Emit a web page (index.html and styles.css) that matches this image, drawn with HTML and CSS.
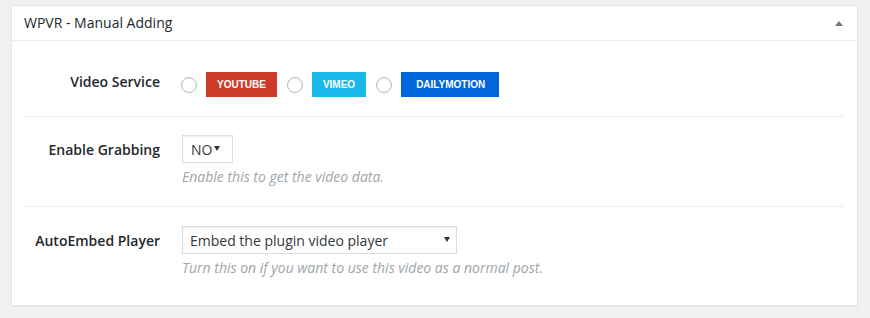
FILE: index.html
```html
<!DOCTYPE html>
<html>
<head>
    <title>WPVR - Manual Adding</title>
    <link rel="stylesheet" href="styles.css">
</head>
<body>
<!-- Metabox -->
<div class="postbox">
    <div class="postbox-header">
        <h2 class="postbox-title">WPVR - Manual Adding</h2>
        <span class="toggle-arrow"></span>
    </div>

    <div class="inside">
        <!-- Video service -->
        <div class="field-row">
            <div class="field-label field-label-radio">Video Service</div>
            <div class="field-control services">
                <label class="service">
                    <input type="radio" name="service" value="youtube">
                    <span class="badge badge-youtube">YOUTUBE</span>
                </label>
                <label class="service">
                    <input type="radio" name="service" value="vimeo">
                    <span class="badge badge-vimeo">VIMEO</span>
                </label>
                <label class="service">
                    <input type="radio" name="service" value="dailymotion">
                    <span class="badge badge-dailymotion">DAILYMOTION</span>
                </label>
            </div>
        </div>

        <!-- Grabbing -->
        <div class="field-row">
            <div class="field-label">Enable Grabbing</div>
            <div class="field-control">
                <div class="select-wrap select-small">
                    <select>
                        <option>NO</option>
                        <option>YES</option>
                    </select>
                </div>
                <p class="description">Enable this to get the video data.</p>
            </div>
        </div>

        <!-- AutoEmbed -->
        <div class="field-row">
            <div class="field-label">AutoEmbed Player</div>
            <div class="field-control">
                <div class="select-wrap select-wide">
                    <select>
                        <option>Embed the plugin video player</option>
                        <option>Use the default player</option>
                    </select>
                </div>
                <p class="description">Turn this on if you want to use this video as a normal post.</p>
            </div>
        </div>
    </div>
</div>
</body>
</html>
```

FILE: styles.css
```css
body {
    margin: 0;
    padding: 5px 12px 12px 11px;
    background: #f1f1f1;
    font-family: "Open Sans", "Liberation Sans", sans-serif;
    font-size: 14px;
    color: #23282d;
}

.postbox {
    background: #fff;
    border: 1px solid #e5e5e5;
    box-shadow: 0 1px 1px rgba(0, 0, 0, 0.04);
}

.postbox-header {
    display: flex;
    align-items: center;
    justify-content: space-between;
    height: 34px;
    padding: 0 14px 0 12px;
    border-bottom: 1px solid #eee;
}

.postbox-title {
    margin: 0;
    font-size: 14px;
    font-weight: 400;
    line-height: 1;
}

.toggle-arrow {
    width: 0;
    height: 0;
    border-left: 4px solid transparent;
    border-right: 4px solid transparent;
    border-bottom: 5px solid #72777c;
    margin-top: 1px;
}

.inside {
    padding: 11px 12px 8px;
}

.field-row {
    display: grid;
    grid-template-columns: 136px 1fr;
    column-gap: 22px;
    padding: 18px 0 19px;
    border-bottom: 1px solid #eee;
}

.field-row:first-child {
    padding-top: 20px;
}

.field-row:last-child {
    border-bottom: none;
    padding-top: 19px;
}

.field-label {
    text-align: right;
    font-weight: 600;
    line-height: 20px;
    padding-top: 5px;
}

.field-label-radio {
    padding-top: 0;
}

.field-control {
    min-width: 0;
}

/* radio + coloured badges */
.services {
    display: flex;
    align-items: center;
    gap: 10px;
    margin-left: -1px;
}

.service {
    display: flex;
    align-items: center;
    gap: 9px;
}

.service input {
    appearance: none;
    margin: 0;
    width: 16px;
    height: 16px;
    border: 1px solid #b4b9be;
    border-radius: 50%;
    background: #fff;
    box-shadow: inset 0 1px 2px rgba(0, 0, 0, 0.07);
}

.badge {
    display: inline-block;
    height: 25px;
    line-height: 25px;
    padding: 0 11px;
    color: #fff;
    font-family: "Liberation Sans", Arial, sans-serif;
    font-size: 10px;
    font-weight: 700;
}

.badge-youtube {
    background: #cd3c29;
}

.badge-vimeo {
    background: #1ab7ea;
}

.badge-dailymotion {
    background: #0066dc;
    padding: 0 14px 0 15px;
}

/* selects */
.select-wrap {
    position: relative;
    display: inline-block;
}

.select-wrap select {
    appearance: none;
    height: 28px;
    margin: 0;
    padding: 0 8px;
    border: 1px solid #ddd;
    border-radius: 0;
    background: #fff;
    box-shadow: inset 0 1px 2px rgba(0, 0, 0, 0.07);
    font-family: "Open Sans", "Liberation Sans", sans-serif;
    font-size: 14px;
    color: #32373c;
}

.select-wrap::after {
    content: "";
    position: absolute;
    top: 11px;
    width: 0;
    height: 0;
    border-left: 3px solid transparent;
    border-right: 3px solid transparent;
    border-top: 5px solid #333;
    pointer-events: none;
}

.select-small select {
    width: 51px;
}

.select-small::after {
    right: 13px;
}

.select-wide select {
    width: 275px;
    padding-left: 7px;
}

.select-wide::after {
    right: 7px;
}

.description {
    margin: 4px 0 0;
    line-height: 20px;
    font-style: italic;
    color: #a0a5aa;
}
```
